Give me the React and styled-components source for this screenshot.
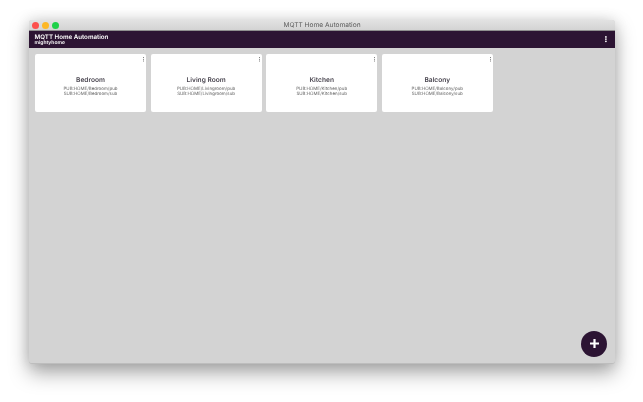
import React from "react";
import styled, { createGlobalStyle, css } from "styled-components";

const Global = createGlobalStyle`
  html, body { margin: 0; padding: 0; background: #fff; width: 643px; height: 402px; overflow: hidden; }
  * { box-sizing: border-box; }
`;

const softText = css`
  filter: blur(0.22px);
`;

const Desktop = styled.div`
  width: 643px;
  height: 402px;
  padding: 20px 28px 38px 29px;
  background: #fff;
  font-family: Inter, "Liberation Sans", sans-serif;
  text-rendering: geometricPrecision;
`;

const Window = styled.div`
  position: relative;
  height: 344px;
  display: flex;
  flex-direction: column;
  background: #d3d3d3;
  border-radius: 3px;
  overflow: hidden;
  box-shadow: 0 9px 20px rgba(0, 0, 0, 0.34), 0 0 14px rgba(0, 0, 0, 0.12);
  border-bottom: 1px solid #bdbdbd;
`;

const TitleBar = styled.div`
  position: relative;
  height: 11px;
  flex: none;
  display: flex;
  align-items: center;
  justify-content: center;
  padding-top: 1px;
  background: linear-gradient(#e2e2e2, #d3d3d3);
  border-bottom: 1px solid #8f8f8f;
`;

const Lights = styled.div`
  position: absolute;
  left: 3px;
  top: 2px;
  display: flex;
  gap: 3px;
`;

const Light = styled.span`
  width: 7px;
  height: 7px;
  border-radius: 50%;
  background: ${(p) => p.$color};
`;

const WindowTitle = styled.span`
  ${softText}
  font-size: 6.6px;
  line-height: 9px;
  color: #5a5a5a;
`;

const AppBar = styled.header`
  height: 17px;
  flex: none;
  display: flex;
  align-items: center;
  justify-content: space-between;
  padding: 0 8.5px 0 5.5px;
  background: #2c1433;
  color: #fff;
`;

const AppTitles = styled.div`
  ${softText}
  display: flex;
  flex-direction: column;
  padding-top: 1px;
`;

const AppTitle = styled.span`
  font-size: 6.2px;
  font-weight: 600;
  line-height: 7.5px;
`;

const AppSubtitle = styled.span`
  font-size: 5px;
  font-weight: 600;
  line-height: 5px;
`;

const Dots = styled.svg`
  display: block;
  flex: none;
`;

const Grid = styled.main`
  display: flex;
  gap: 4.6px;
  padding: 6px;
  align-items: flex-start;
`;

const Card = styled.section`
  position: relative;
  width: 111px;
  height: 58px;
  display: flex;
  flex-direction: column;
  align-items: center;
  padding-top: 21.5px;
  background: #fff;
  border-radius: 2px;
`;

const CardMenu = styled.div`
  position: absolute;
  top: 3px;
  right: 2px;
`;

const CardTitle = styled.h2`
  ${softText}
  margin: 0 0 2px;
  font-size: 6.6px;
  line-height: 9px;
  font-weight: 600;
  color: #4a4650;
`;

const Topic = styled.p`
  ${softText}
  margin: 0;
  font-size: 4.45px;
  line-height: 5.6px;
  color: #666;
`;

const Fab = styled.button`
  position: absolute;
  right: 8px;
  bottom: 6.5px;
  width: 26px;
  height: 26px;
  padding: 0;
  display: flex;
  align-items: center;
  justify-content: center;
  border: none;
  border-radius: 50%;
  background: #2c1433;
`;

const rooms = [
  { name: "Bedroom", path: "Bedroom" },
  { name: "Living Room", path: "Livingroom" },
  { name: "Kitchen", path: "Kitchen" },
  { name: "Balcony", path: "Balcony" },
];

const VerticalDots = ({ color, r, gap }) => (
  <Dots width={r * 2} height={gap * 2 + r * 2} viewBox={`0 0 ${r * 2} ${gap * 2 + r * 2}`}>
    {[0, 1, 2].map((i) => (
      <circle key={i} cx={r} cy={r + i * gap} r={r} fill={color} />
    ))}
  </Dots>
);

export default function App() {
  return (
    <Desktop>
      <Global />
      <Window>
        <TitleBar>
          <Lights>
            <Light $color="#fc4f4c" />
            <Light $color="#fdb827" />
            <Light $color="#1fd14a" />
          </Lights>
          <WindowTitle>MQTT Home Automation</WindowTitle>
        </TitleBar>
        <AppBar>
          <AppTitles>
            <AppTitle>MQTT Home Automation</AppTitle>
            <AppSubtitle>mightyhome</AppSubtitle>
          </AppTitles>
          <VerticalDots color="#fff" r={0.9} gap={2.2} />
        </AppBar>
        <Grid>
          {rooms.map((room) => (
            <Card key={room.name}>
              <CardMenu>
                <VerticalDots color="#666" r={0.55} gap={1.7} />
              </CardMenu>
              <CardTitle>{room.name}</CardTitle>
              <Topic>PUB:HOME/{room.path}/pub</Topic>
              <Topic>SUB:HOME/{room.path}/sub</Topic>
            </Card>
          ))}
        </Grid>
        <Fab aria-label="Add">
          <svg width="11" height="11" viewBox="0 0 11 11">
            <path d="M5.5 1v9M1 5.5h9" stroke="#fff" strokeWidth="2.2" />
          </svg>
        </Fab>
      </Window>
    </Desktop>
  );
}
